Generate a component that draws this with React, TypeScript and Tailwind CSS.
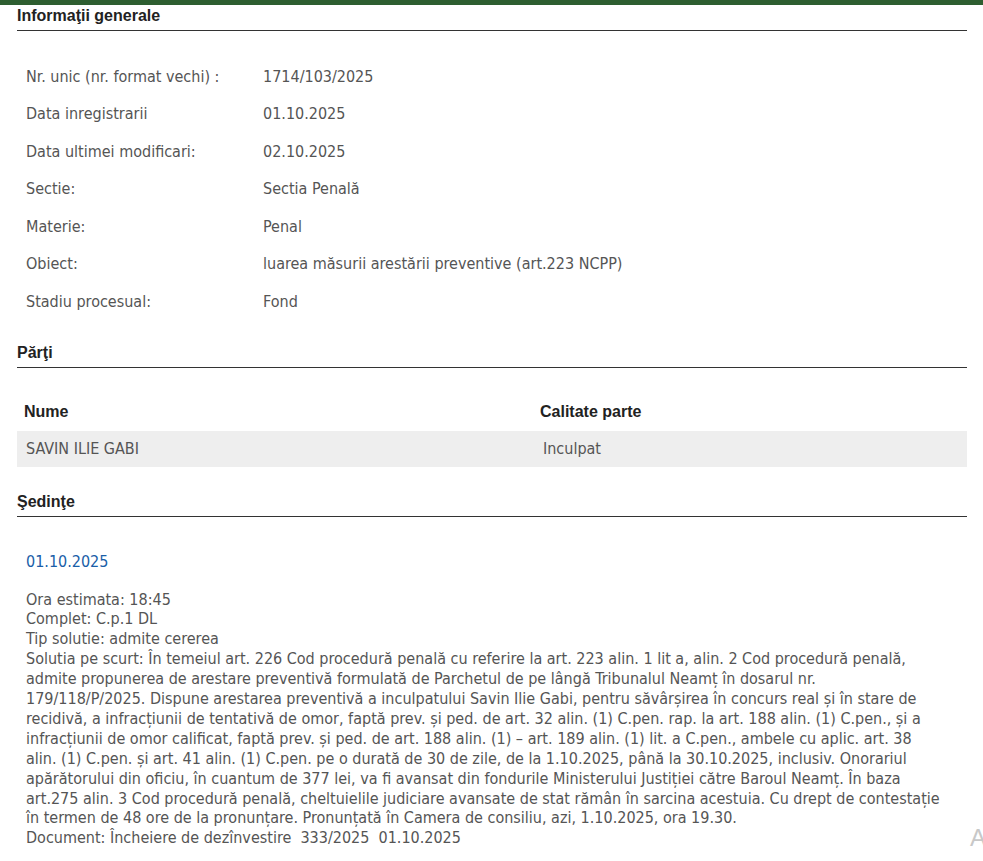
import React from "react";

const body = { fontFamily: '"DejaVu Sans Condensed", Tahoma, sans-serif' };
const head = { fontFamily: '"Liberation Sans", Arial, sans-serif' };

const info: [string, string][] = [
  ["Nr. unic (nr. format vechi) :", "1714/103/2025"],
  ["Data inregistrarii", "01.10.2025"],
  ["Data ultimei modificari:", "02.10.2025"],
  ["Sectie:", "Sectia Penală"],
  ["Materie:", "Penal"],
  ["Obiect:", "luarea măsurii arestării preventive (art.223 NCPP)"],
  ["Stadiu procesual:", "Fond"],
];

const solutie = [
  "Solutia pe scurt: În temeiul art. 226 Cod procedură penală cu referire la art. 223 alin. 1 lit a, alin. 2 Cod procedură penală,",
  "admite propunerea de arestare preventivă formulată de Parchetul de pe lângă Tribunalul Neamț în dosarul nr.",
  "179/118/P/2025. Dispune arestarea preventivă a inculpatului Savin Ilie Gabi, pentru săvârșirea în concurs real și în stare de",
  "recidivă, a infracțiunii de tentativă de omor, faptă prev. și ped. de art. 32 alin. (1) C.pen. rap. la art. 188 alin. (1) C.pen., și a",
  "infracțiunii de omor calificat, faptă prev. și ped. de art. 188 alin. (1) – art. 189 alin. (1) lit. a C.pen., ambele cu aplic. art. 38",
  "alin. (1) C.pen. și art. 41 alin. (1) C.pen. pe o durată de 30 de zile, de la 1.10.2025, până la 30.10.2025, inclusiv. Onorariul",
  "apărătorului din oficiu, în cuantum de 377 lei, va fi avansat din fondurile Ministerului Justiției către Baroul Neamț. În baza",
  "art.275 alin. 3 Cod procedură penală, cheltuielile judiciare avansate de stat rămân în sarcina acestuia. Cu drept de contestație",
  "în termen de 48 ore de la pronunțare. Pronunțată în Camera de consiliu, azi, 1.10.2025, ora 19.30.",
];

function SectionTitle({ children }: { children: React.ReactNode }) {
  return (
    <h2 style={head} className="border-b border-[#333] pb-[5px] text-[16px] font-bold leading-[18px] text-[#222]">
      {children}
    </h2>
  );
}

export default function App() {
  return (
    <div className="relative h-[861px] overflow-hidden bg-white text-[#555]" style={body}>
      <div className="h-[5px] bg-[#2e5e30]" />
      <div className="pl-[17px] pr-[16px]">
        <div className="pt-[2px]">
          <SectionTitle>Informaţii generale</SectionTitle>
        </div>

        <div className="pt-[27px] text-[16px]">
          {info.map(([k, v]) => (
            <div key={k} className="flex h-[37.5px] items-center pl-[9px]">
              <span className="w-[237px]">{k}</span>
              <span>{v}</span>
            </div>
          ))}
        </div>

        <div className="pt-[23px]">
          <SectionTitle>Părţi</SectionTitle>
        </div>

        <div className="pt-[25px] text-[16px]">
          <div style={head} className="flex h-[38px] items-center pl-[7px] font-bold text-[#222]">
            <span className="w-[516px]">Nume</span>
            <span>Calitate parte</span>
          </div>
          <div className="flex h-[36px] items-center bg-[#eeeeee] pl-[9px]">
            <span className="w-[517px]">SAVIN ILIE GABI</span>
            <span>Inculpat</span>
          </div>
        </div>

        <div className="pt-[26px]">
          <SectionTitle>Şedinţe</SectionTitle>
        </div>

        <div className="pl-[9px] pt-[35px] text-[16px]">
          <div className="leading-[20px] text-[#1a5ea8]">01.10.2025</div>
          <div className="mt-[18px] leading-[19.9px] whitespace-nowrap">
            <div>Ora estimata: 18:45</div>
            <div>Complet: C.p.1 DL</div>
            <div>Tip solutie: admite cererea</div>
            {solutie.map((l) => (
              <div key={l}>{l}</div>
            ))}
            <div>Document: Încheiere de dezînvestire&nbsp; 333/2025&nbsp; 01.10.2025</div>
          </div>
        </div>
      </div>
      <span style={head} className="absolute left-[970px] top-[826px] text-[24px] leading-none text-[#c8c8c8]">
        A
      </span>
    </div>
  );
}
